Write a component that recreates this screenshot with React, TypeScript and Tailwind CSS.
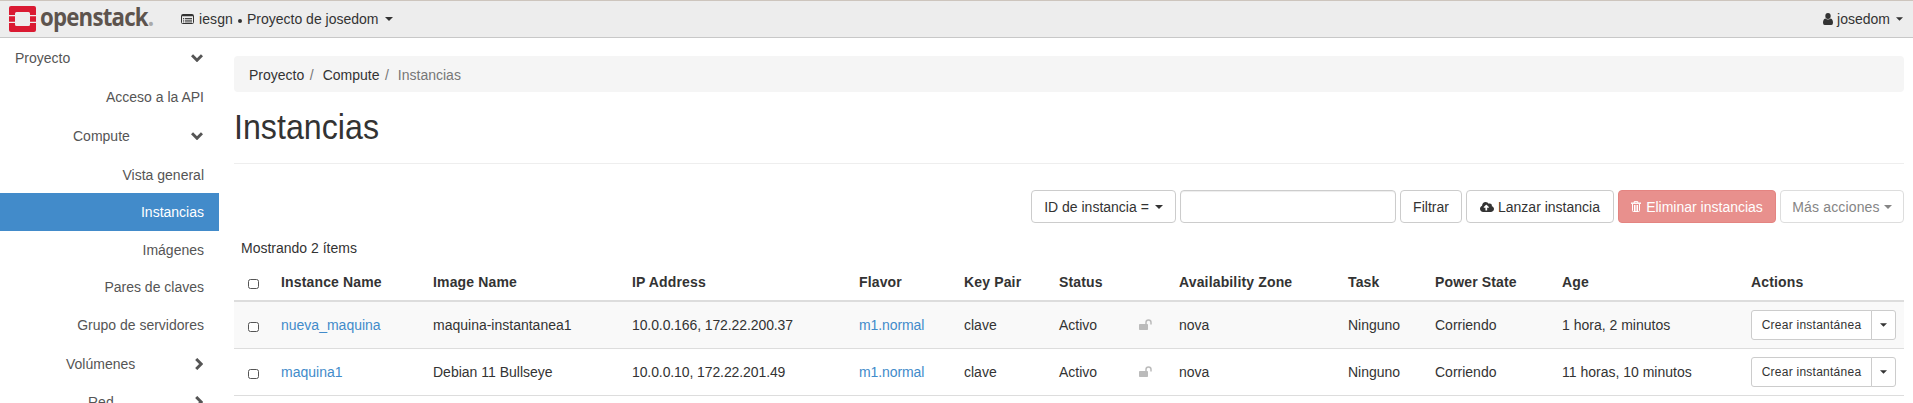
import type { ReactNode } from "react";
import { FaCloudUploadAlt } from "react-icons/fa";

function Caret({ className = "w-2" }: { className?: string }) {
  return (
    <svg className={`inline-block h-1 shrink-0 ${className}`} viewBox="0 0 8 4" fill="currentColor">
      <path d="M0 0h8L4 4z" />
    </svg>
  );
}

function Chevron({ open }: { open: boolean }) {
  return open ? (
    <svg className="h-2 w-3" viewBox="0 0 12 8" fill="none" stroke="currentColor" strokeWidth="3">
      <path d="M1 1.2l5 5 5-5" />
    </svg>
  ) : (
    <svg className="h-3 w-2" viewBox="0 0 8 12" fill="none" stroke="currentColor" strokeWidth="3">
      <path d="M1.2 1l5 5-5 5" />
    </svg>
  );
}

function UnlockIcon() {
  return (
    <svg className="h-3 w-[13px] text-[#bbb]" viewBox="0 0 13 12" fill="currentColor">
      <rect x="0" y="5" width="9" height="6" rx="0.8" />
      <path d="M7 5.5V3.4a2.5 2.5 0 0 1 5 0V5.5" fill="none" stroke="currentColor" strokeWidth="1.5" />
    </svg>
  );
}

function TrashIcon() {
  return (
    <svg className="h-[11px] w-[10px]" viewBox="0 0 10 11" fill="none" stroke="currentColor">
      <path d="M0 2.200h10" strokeWidth="1.400" />
      <path d="M3.2 2V.6h3.6V2" />
      <path d="M1.500 3v6.700q0 .8.8.8h5.400q.8 0 .8-.8V3M3.500 4v6M5 4v6M6.500 4v6" />
    </svg>
  );
}

function UserIcon() {
  return (
    <svg className="mr-[4px] h-[12px] w-[10px]" viewBox="0 0 10 12" fill="currentColor">
      <ellipse cx="5" cy="3" rx="2.700" ry="3" />
      <path d="M2.300 5.400Q5 7.600 7.700 5.400 10 6 10 9.800 10 12 8.300 12H1.700Q0 12 0 9.800 0 6 2.300 5.400z" />
    </svg>
  );
}

function Logo() {
  return (
    <div className="flex h-[36px] items-start pl-[9px]">
      <svg className="mt-[5px] h-[26px] w-[27px]" viewBox="0 0 27 26">
        <path
          fill="#da1a32"
          d="M2 0h23q2 0 2 2v7h-6V7.500q0-1.500-1.500-1.500h-12Q6 6 6 7.500V9H0V2q0-2 2-2zM0 10.200h6v5.600H0zM21 10.200h6v5.600h-6zM0 17h6v1.500Q6 20 7.500 20h12q1.500 0 1.500-1.500V17h6v7q0 2-2 2H2q-2 0-2-2z"
        />
      </svg>
      <span className="ml-[4px] mt-[-1px] inline-block origin-left scale-x-[0.89] font-['Open_Sans'] text-[25px] leading-[32px] font-bold tracking-[-0.9px] whitespace-nowrap text-[#5d544e]">
        openstack<span className="text-[#aaa]">.</span>
      </span>
    </div>
  );
}

const navItems: { label: string; box: string; open?: boolean }[] = [
  { label: "Proyecto", box: "h-[39px] pl-[15px]", open: true },
  { label: "Acceso a la API", box: "h-[39px] justify-end" },
  { label: "Compute", box: "h-[39px] pl-[73px]", open: true },
  { label: "Vista general", box: "h-[38px] justify-end pt-px" },
  { label: "Instancias", box: "h-[38px] justify-end bg-[#428bca] text-white" },
  { label: "Imágenes", box: "h-[37px] justify-end" },
  { label: "Pares de claves", box: "h-[38px] justify-end" },
  { label: "Grupo de servidores", box: "h-[38px] justify-end" },
  { label: "Volúmenes", box: "h-[39px] pl-[66px]", open: false },
  { label: "Red", box: "h-[38px] pl-[88px]", open: false },
];

const columns =
  "grid grid-cols-[39px_152px_199px_227px_105px_95px_80px_39px_170px_87px_127px_189px_161px] items-center *:pl-2";

const instances = [
  { name: "nueva_maquina", image: "maquina-instantanea1", ip: "10.0.0.166, 172.22.200.37", age: "1 hora, 2 minutos", bg: "bg-[#f9f9f9]" },
  { name: "maquina1", image: "Debian 11 Bullseye", ip: "10.0.0.10, 172.22.201.49", age: "11 horas, 10 minutos", bg: "bg-white" },
];

function Checkbox() {
  return (
    <span className="block">
      <span className="mt-[3px] ml-[6px] block h-[10px] w-[11px] rounded-[2.5px] border border-[#555] bg-white" />
    </span>
  );
}

function Button({ className, children }: { className: string; children: ReactNode }) {
  return (
    <button className={`flex h-[33px] items-center justify-center rounded border whitespace-nowrap ${className}`}>
      {children}
    </button>
  );
}

export default function App() {
  return (
    <div className="h-[403px] w-[1913px] overflow-hidden bg-white font-['Liberation_Sans',sans-serif] text-[14px] leading-5 text-[#333]">
      <header className="flex h-[38px] items-center border-t border-b border-t-[#cdc5bd] border-b-[#c8c8c8] bg-[#ededed]">
        <div className="w-[181px]">
          <Logo />
        </div>
        <div className="flex items-center">
          <svg className="mr-[5px] h-[10px] w-[13px]" viewBox="0 0 13 10" fill="none" stroke="currentColor">
            <rect x=".5" y=".5" width="12" height="9" rx="1" />
            <path d="M1 1.500h11" strokeWidth="1.500" />
            <path d="M2 4.500h1.200M4 4.500h7M2 6.200h1.200M4 6.200h7M2 7.900h1.200M4 7.900h7" strokeWidth=".9" />
          </svg>
          <span className="tracking-[0.1px]">iesgn</span>
          <span className="mr-[5px] ml-[5px] mt-[4px] size-[4px] rounded-full bg-[#333]" />
          <span>Proyecto de josedom</span>
          <Caret className="ml-[6px] w-2" />
        </div>
        <div className="ml-auto flex items-center pr-[10px]">
          <UserIcon />
          <span>josedom</span>
          <Caret className="ml-[6px] w-[7px]" />
        </div>
      </header>

      <div className="flex">
        <nav className="w-[219px] text-[#555]">
          {navItems.map((item) => (
            <div key={item.label} className={`flex items-center pr-[15px] ${item.box}`}>
              <span>{item.label}</span>
              {item.open !== undefined && (
                <span className="mr-px ml-auto">
                  <Chevron open={item.open} />
                </span>
              )}
            </div>
          ))}
        </nav>

        <main className="ml-[15px] w-[1670px] pt-[18px]">
          <div className="flex h-9 items-center rounded bg-[#f5f5f5] pt-px pl-[15px] whitespace-pre">
            <span>Proyecto</span>
            <span className="pr-[9px] pl-[5.500px] text-[#777]">/</span>
            <span>Compute</span>
            <span className="pr-[9px] pl-[5.500px] text-[#777]">/</span>
            <span className="text-[#777]">Instancias</span>
          </div>
          <h1 className="mt-[15px] h-[57px] border-b border-[#eee] text-[35px] leading-[40px]">
            <span className="inline-block origin-left scale-x-[0.92]">Instancias</span>
          </h1>

          <div className="mt-[26px] flex justify-end gap-1">
            <Button className="w-[145px] border-[#ccc]">
              ID de instancia =<Caret className="ml-[6px] w-2" />
            </Button>
            <input className="h-[33px] w-[216px] rounded border border-[#ccc] shadow-[inset_0_1px_1px_rgba(0,0,0,0.075)]" />
            <Button className="w-[62px] border-[#ccc]">Filtrar</Button>
            <Button className="w-[148px] border-[#ccc]">
              <FaCloudUploadAlt className="mr-1 size-[14px]" />
              Lanzar instancia
            </Button>
            <Button className="w-[158px] gap-[5px] border-[#e48481] bg-[#e8908d] text-white">
              <TrashIcon />
              Eliminar instancias
            </Button>
            <Button className="w-[124px] border-[#ddd] text-[#858585]">
              <span className="tracking-[0.15px]">Más acciones</span>
              <Caret className="ml-1 w-2" />
            </Button>
          </div>

          <p className="mt-[15px] pl-[7px]">Mostrando 2 ítems</p>

          <div className={`mt-[5px] h-[39px] border-b-2 border-[#ddd] pt-px font-bold tracking-[0.15px] ${columns}`}>
            <Checkbox />
            <span>Instance Name</span>
            <span>Image Name</span>
            <span>IP Address</span>
            <span>Flavor</span>
            <span>Key Pair</span>
            <span>Status</span>
            <span />
            <span className="relative left-px">Availability Zone</span>
            <span>Task</span>
            <span>Power State</span>
            <span>Age</span>
            <span>Actions</span>
          </div>
          {instances.map((row) => (
            <div key={row.name} className={`h-[47px] border-b border-[#ddd] ${row.bg} ${columns}`}>
              <Checkbox />
              <a className="text-[#428bca]">{row.name}</a>
              <span>{row.image}</span>
              <span className="tracking-[-0.1px]">{row.ip}</span>
              <a className="tracking-[-0.1px] text-[#428bca]">m1.normal</a>
              <span>clave</span>
              <span>Activo</span>
              <span>
                <UnlockIcon />
              </span>
              <span className="relative left-px">nova</span>
              <span>Ninguno</span>
              <span>Corriendo</span>
              <span>{row.age}</span>
              <div className="flex">
                <button className="h-[30px] w-[121px] rounded-l-[3px] border border-[#ccc] bg-white text-[12px] tracking-[0.25px] whitespace-nowrap">
                  Crear instantánea
                </button>
                <button className="-ml-px flex h-[30px] w-[25px] items-center justify-center rounded-r-[3px] border border-[#ccc] bg-white">
                  <Caret className="w-[7px]" />
                </button>
              </div>
            </div>
          ))}
        </main>
      </div>
    </div>
  );
}
